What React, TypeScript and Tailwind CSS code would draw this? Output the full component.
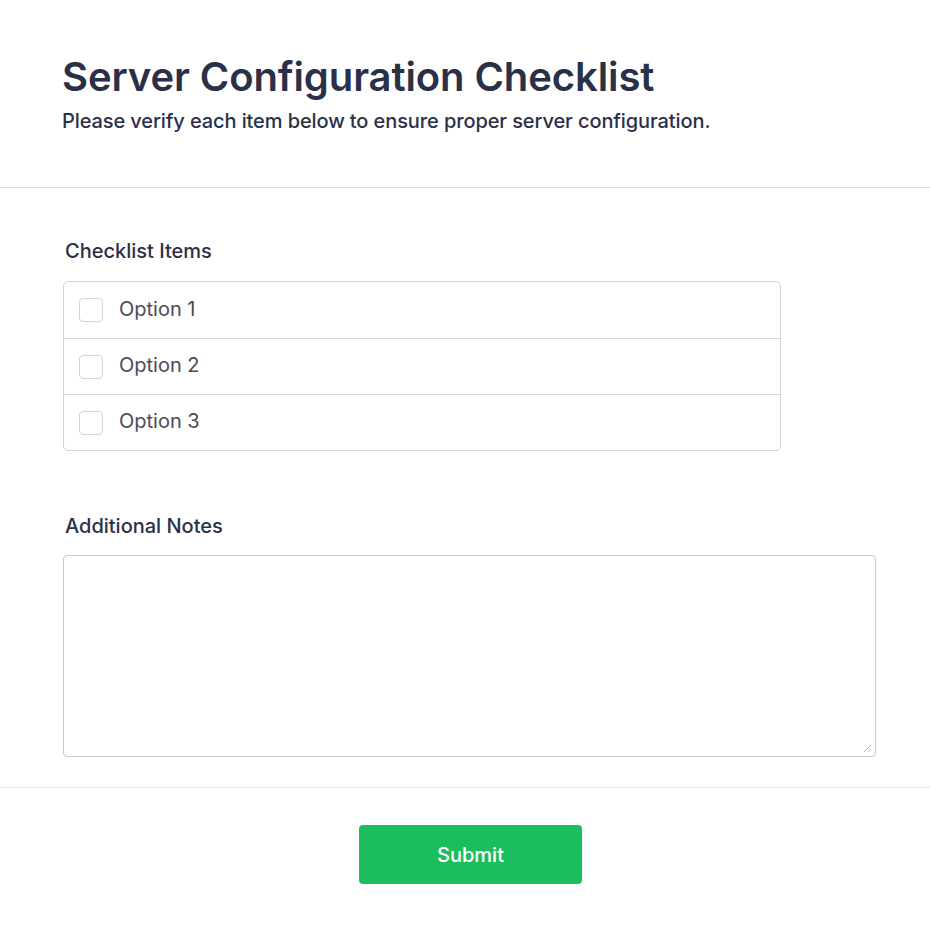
import { useState } from 'react';

const options = ['Option 1', 'Option 2', 'Option 3'];

export default function App() {
  const [checked, setChecked] = useState<boolean[]>([false, false, false]);
  const [notes, setNotes] = useState('');

  const toggle = (i: number) => {
    setChecked(prev => prev.map((c, j) => (j === i ? !c : c)));
  };

  return (
    <div className="min-h-screen bg-white text-[#2a3048]" style={{ fontFamily: 'Inter, "Noto Sans", sans-serif' }}>
      {/* Header */}
      <div className="border-b border-[#dcdde3] px-[62px] pt-[53px] pb-[52px]">
        <h1 className="text-[40px] leading-[48px] font-semibold tracking-[-0.1px]">Server Configuration Checklist</h1>
        <p className="mt-[6px] text-[20px] leading-[28px] font-medium tracking-[-0.1px]">
          Please verify each item below to ensure proper server configuration.
        </p>
      </div>

      {/* Form body */}
      <div className="px-[63px] pt-[49px] pb-[30px] border-b border-[#e3e4e8]">
        <label className="block pl-[2px] text-[20px] leading-[28px] font-medium mb-[16px]">Checklist Items</label>
        <div className="w-[718px] border border-[#d4d4d8] rounded-[5px]">
          {options.map((opt, i) => (
            <label
              key={opt}
              className={`flex items-center h-[56px] px-[15px] gap-[16px] cursor-pointer ${i > 0 ? 'border-t border-[#d4d4d8]' : ''}`}
            >
              <input type="checkbox" checked={checked[i]} onChange={() => toggle(i)} className="sr-only" />
              <span
                className={`w-[24px] h-[24px] rounded-[4px] border ${checked[i] ? 'bg-[#1bbd5c] border-[#1bbd5c]' : 'border-[#d4d4d8] bg-white'}`}
              />
              <span className="text-[20px] leading-[28px] text-[#4a4b57] -mt-[3px]">{opt}</span>
            </label>
          ))}
        </div>

        <label className="block pl-[2px] mt-[61px] text-[20px] leading-[28px] font-medium mb-[15px]">Additional Notes</label>
        <div className="relative w-[813px]">
          <textarea
            value={notes}
            onChange={e => setNotes(e.target.value)}
            className="block w-full h-[202px] border border-[#c6c8d2] rounded-[4px] p-3 text-[16px] outline-none resize-none"
          />
          {/* resize grip */}
          <svg className="absolute right-[4px] bottom-[4px] pointer-events-none" width="9" height="9" viewBox="0 0 9 9">
            <line x1="1" y1="8" x2="8" y2="1" stroke="#b8bac4" strokeWidth="1" />
            <line x1="5" y1="8" x2="8" y2="5" stroke="#b8bac4" strokeWidth="1" />
          </svg>
        </div>
      </div>

      {/* Footer */}
      <div className="flex justify-center pl-[11px] pt-[37px] pb-[50px]">
        <button className="w-[223px] h-[59px] rounded-[4px] bg-[#1bbd5c] text-white text-[20px] font-medium">
          Submit
        </button>
      </div>
    </div>
  );
}
